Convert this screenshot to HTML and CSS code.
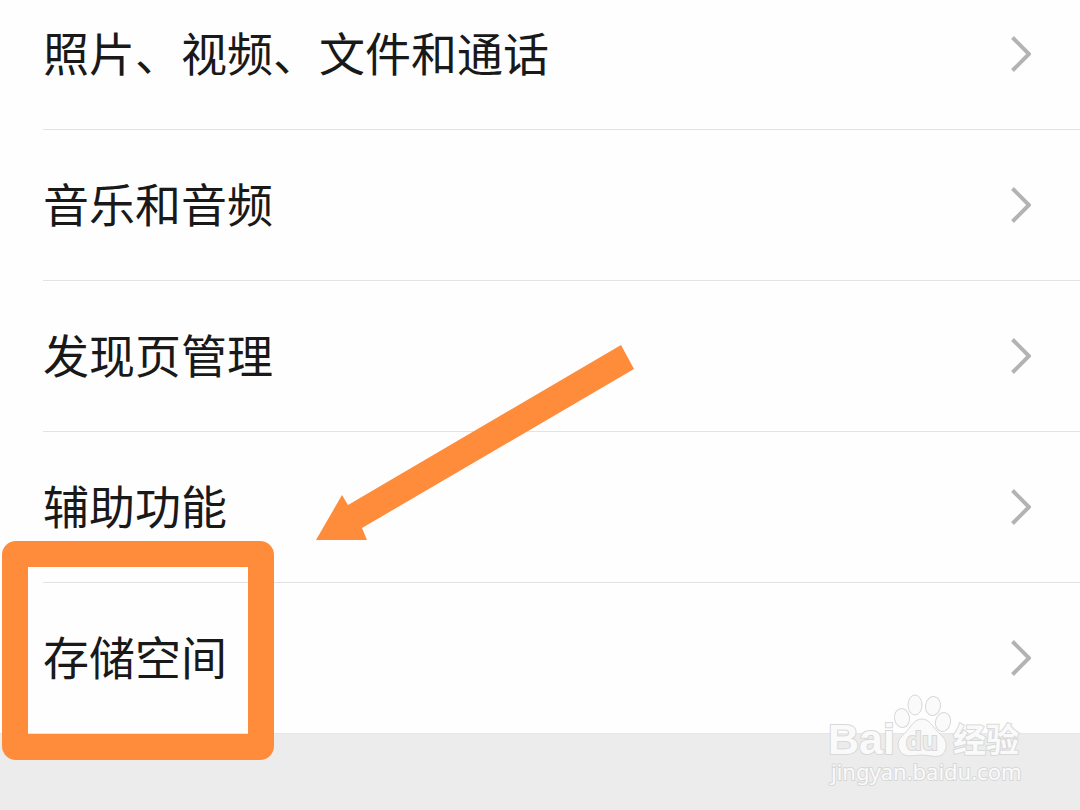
FILE: index.html
```html
<!DOCTYPE html>
<html lang="zh-CN">
<head>
<meta charset="UTF-8">
<meta name="viewport" content="width=device-width, initial-scale=1">
<title>通用</title>
<link rel="stylesheet" href="styles.css">
</head>
<body>

<main class="page">
  <nav class="settings">
    <a class="row" href="#media">
      <span class="label">照片、视频、文件和通话</span>
      <svg class="chevron" viewBox="0 0 20 36"><path d="M1.5 1.5 L18 18 L1.5 34.5"/></svg>
    </a>
    <a class="row" href="#audio">
      <span class="label">音乐和音频</span>
      <svg class="chevron" viewBox="0 0 20 36"><path d="M1.5 1.5 L18 18 L1.5 34.5"/></svg>
    </a>
    <a class="row" href="#discover">
      <span class="label">发现页管理</span>
      <svg class="chevron" viewBox="0 0 20 36"><path d="M1.5 1.5 L18 18 L1.5 34.5"/></svg>
    </a>
    <a class="row" href="#accessibility">
      <span class="label">辅助功能</span>
      <svg class="chevron" viewBox="0 0 20 36"><path d="M1.5 1.5 L18 18 L1.5 34.5"/></svg>
    </a>
    <a class="row" href="#storage">
      <span class="label">存储空间</span>
      <svg class="chevron" viewBox="0 0 20 36"><path d="M1.5 1.5 L18 18 L1.5 34.5"/></svg>
    </a>
  </nav>

  <!-- marks drawn over the list -->
  <div class="highlight"></div>
  <svg class="arrow" viewBox="0 0 320 196">
    <path d="M305 0 L318 24 L46 183 L51 195 L0 195 L26 150 L32 160 Z"/>
  </svg>

  <svg class="watermark" viewBox="0 0 210 100">
    <text class="brand" x="8" y="64">Bai</text>
    <ellipse cx="82" cy="28" rx="7.5" ry="9.5" transform="rotate(-10 82 28)"/>
    <ellipse cx="95" cy="15" rx="7" ry="10"/>
    <ellipse cx="113" cy="16" rx="7.5" ry="9.5" transform="rotate(8 113 16)"/>
    <ellipse cx="123" cy="32" rx="7.5" ry="9.5" transform="rotate(14 123 32)"/>
    <path d="M102 29 C94 29 91 37 85 43 C78 49 77 54 79 59 C83 69 93 65 102 65 C111 65 121 70 125 61 C128 54 125 48 120 44 C113 38 110 29 102 29 Z"/>
    <text class="du" x="86" y="60">du</text>
    <text class="product" x="133" y="62">经验</text>
    <text class="site" x="11" y="90">jingyan.baidu.com</text>
  </svg>
</main>

</body>
</html>
```

FILE: styles.css
```css
:root { --mark-color: #ff8c3a; --line-color: #e3e3e3; }

* { box-sizing: border-box; }

body {
  margin: 0;
  background: #ececec;
  color: #191919;
  font-family: "Noto Sans CJK SC", sans-serif;
}

.page { position: relative; min-height: 100vh; overflow: hidden; }

.settings { background: #fefefe; padding-left: 43px; border-bottom: 1px solid #e6e6e6; }

.row {
  display: flex;
  align-items: center;
  justify-content: space-between;
  padding: 40px 49px 40px 0;
  border-bottom: 1px solid var(--line-color);
  color: inherit;
  text-decoration: none;
}
.row:first-child { padding-top: 19px; }
.row:last-child  { border-bottom: none; }

.label { font-size: 46px; line-height: 64px; padding-bottom: 6px; }

.chevron { width: 20px; height: 36px; fill: none; stroke: #b3b3b3; stroke-width: 4; }

.highlight {
  position: absolute;
  left: 2px;
  top: 541px;
  width: 272px;
  height: 219px;
  border: 26px solid var(--mark-color);
  border-radius: 14px;
}

.arrow {
  position: absolute;
  left: 316px;
  top: 345px;
  width: 320px;
  height: 196px;
  fill: var(--mark-color);
}

.watermark {
  position: absolute;
  right: 50px;
  top: 690px;
  width: 210px;
  height: 100px;
  fill: #fafafa;
  stroke: #d8d8d8;
  stroke-width: 1;
}
.watermark text     { paint-order: stroke; stroke-width: 2; }
.watermark .brand   { font: bold 43px "Liberation Sans", sans-serif; }
.watermark .du      { font: bold 26px "Liberation Sans", sans-serif; fill: #ececec; }
.watermark .product { font: bold 33px "Noto Sans CJK SC", sans-serif; }
.watermark .site    { font: 22px "Noto Sans", sans-serif; }
```
